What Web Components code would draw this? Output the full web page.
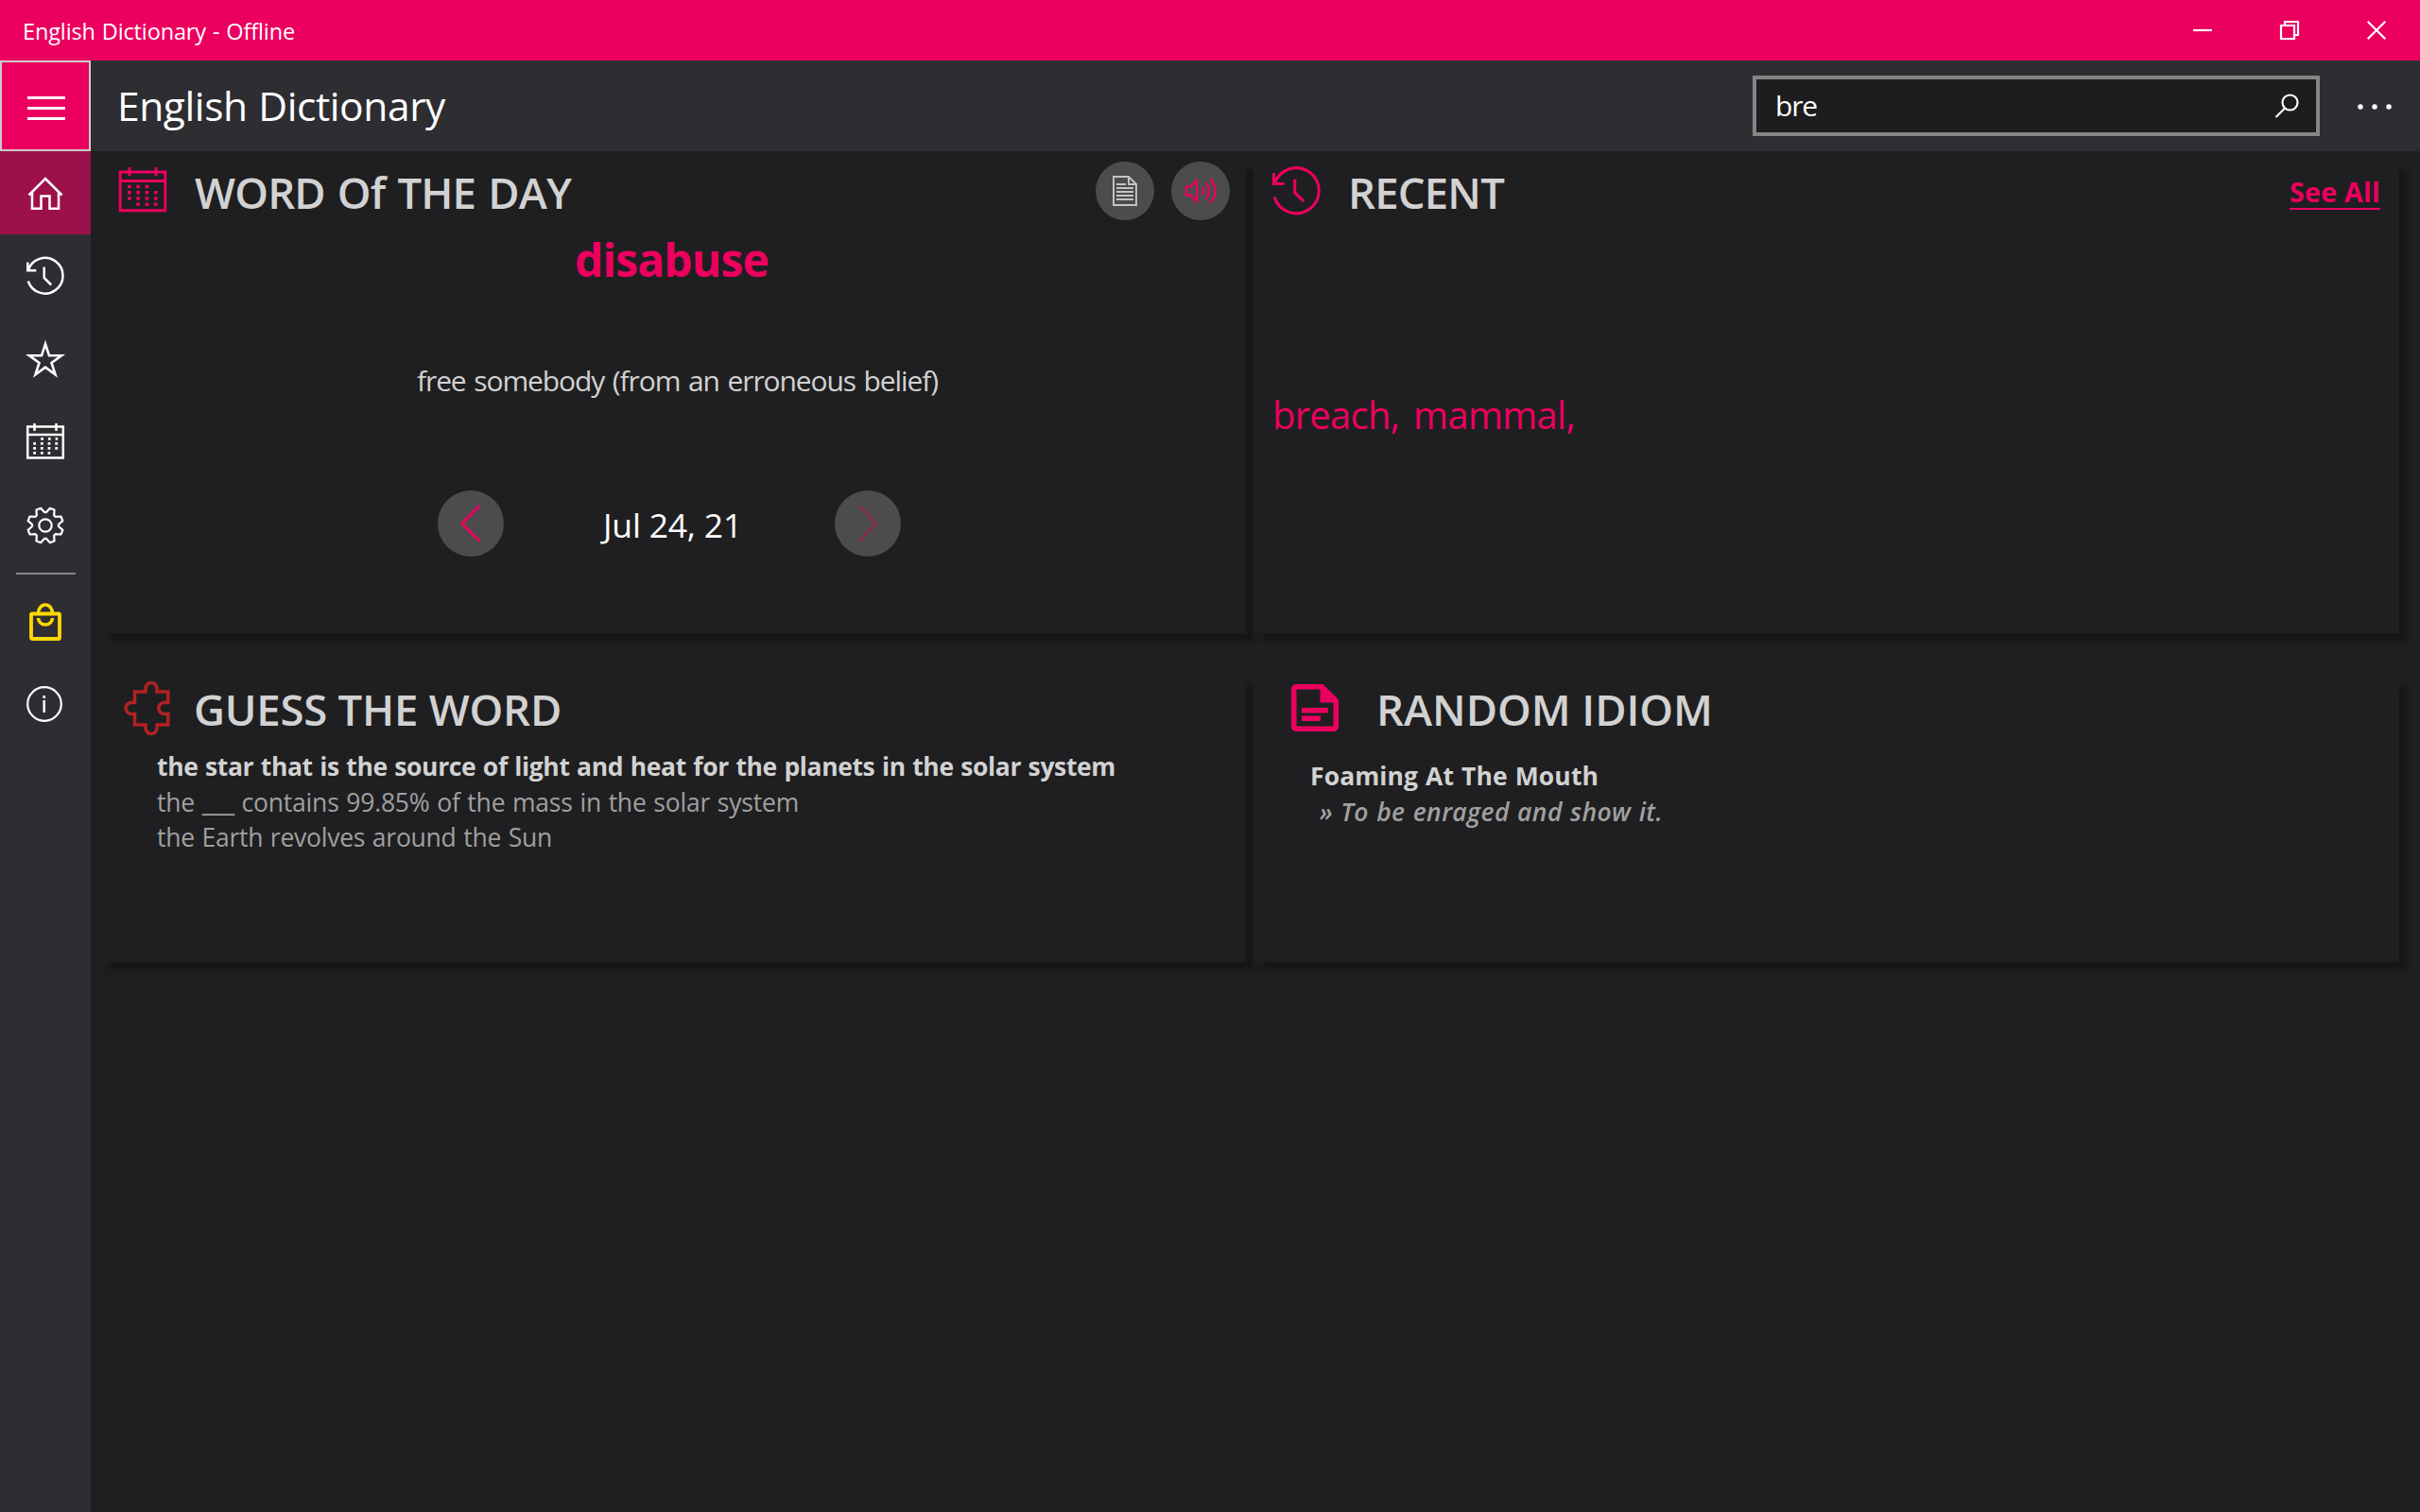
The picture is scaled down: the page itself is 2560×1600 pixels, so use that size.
<!DOCTYPE html>
<html lang="en">
<head>
<meta charset="utf-8">
<title>English Dictionary - Offline</title>
<style>
body{
    margin: 0;
    background: #1f1f21;
    color: #fff;
    font-family: "Open Sans", "Noto Sans", sans-serif;
    overflow: hidden;
}
</style>
</head>
<body>
<app-shell></app-shell>

<script>
// every icon is drawn in its own pixel box: [width, height, markup]
const ICONS = {
    menu: [40, 26, `<path d="M0 1.5h40M0 12.5h40M0 23.5h40" stroke-width="3"/>`],
    home: [38, 36, `<path d="M1.5 19.5 19 2l17.500 17.500M5 16.500V33.700h9.500V20.500h9v13.200H33V16.500" stroke-width="2.500"/>`],
    history: [40, 40, `<path d="M1.300 5.500v8.700h9M1.800 14A18.800 18.800 0 1 1 1.800 25.500M18.700 10.500V22l7.500 7.500" stroke-width="2.500"/>`],
    star: [40, 40, `<path d="M20 4l4 12.300h13l-10.500 7.600 4 12.400L20 28.700 9.500 36.300l4-12.400L3 16.300h13z" stroke-width="2.600"/>`],
    calendar: [40, 38, `<path d="M1.200 3.500h37.600v33H1.200zM1 12h38M8.500 0v8M31.500 0v8" stroke-width="2.500"/>
        <path d="M15.200 16.300h18M7.200 21.300h26M7.200 26.300h26M7.200 31.300h18" stroke-width="2.800" stroke-dasharray="2.800 4.900"/>`],
    gear: [40, 40, `<path class="teeth" stroke-linejoin="round"/><circle cx="20" cy="20" r="6.700"/>`],
    bag: [34, 40, `<rect x="2" y="11.500" width="30" height="26.500" rx="1" stroke-width="3.800"/><path d="M9.500 11a7.500 9 0 0 1 15 0M9.500 16a7.500 7 0 0 0 15 0" stroke-width="3.600"/>`],
    info: [38, 38, `<circle cx="19" cy="19" r="17.800"/><path d="M18.700 15v13M18.700 10v3" stroke-width="2.500"/>`],
    calendarBig: [50, 47, `<path d="M1.200 5h47.600v40.800H1.200zM1.200 14.500h47.600M11 0v9M39 0v9" stroke-width="2.900"/>
        <path d="M9 20.500h24M9 26.800h33M9 33h33M18.300 39.300h24" stroke-width="3.600" stroke-dasharray="3.600 5.700"/>`],
    historyBig: [51, 50, `<path d="M1.500 6v11.500h11M2.500 17A24 24 0 1 1 2.200 31.500M23.700 12.500V27l9.500 9" stroke-width="3.100"/>`],
    puzzle: [48, 57, `<path d="M10.500 11H22V7.500a6 6 0 0 1 12 0V11h11.800v11.500h-4a6 6 0 0 0 0 12h4V46H34v3.500a6 6 0 0 1-12 0V46H10.500V34.500h-3.500a6 6 0 0 1 0-12h3.500z" stroke-width="3.500"/>`],
    note: [50, 50, `<path d="M5 0h28.500L50 16.500V45a5 5 0 0 1-5 5H5a5 5 0 0 1-5-5V5a5 5 0 0 1 5-5zM5.500 5.500v39h39V19.500H30.500V5.500zM11 25h28v5.500H11zM11 33.500h20V39H11z" fill="currentColor" stroke="none" fill-rule="evenodd"/>`],
    page: [26, 32, `<path d="M1 1h16l8 8v22H1zM17 1v8h8M4 9h10M4 13h18M4 17h18M4 21h18M4 25h18" stroke-width="1.900"/>`],
    speaker: [33, 30, `<path d="M1 10.500h4.500L12 4v22l-6.500-6.500H1zM17.500 11a6 6 0 0 1 0 8M21.500 6.500a12 12 0 0 1 0 17M26 2a18 18 0 0 1 0 26" stroke-width="2.300"/>`],
    back: [22, 40, `<path d="M20.500 1 2 20l18.500 19" stroke-width="3"/>`],
    forward: [22, 40, `<path d="M1.500 1 20 20 1.500 39" stroke-width="2.500"/>`],
    search: [26, 26, `<circle cx="16.500" cy="9.500" r="8"/><path d="M11 15.500 1.500 25"/>`],
    more: [36, 6, `<path d="M3 3h.01M18 3h.01M33 3h.01" stroke-width="5.500" stroke-linecap="round"/>`],
    minimize: [20, 20, `<path d="M0 10h20"/>`],
    restore: [20, 20, `<path d="M1 5h14v14H1zM5 5V1h14v14h-4"/>`],
    close: [20, 20, `<path d="M.7.7l18.600 18.600M19.300.7.7 19.300"/>`]
};

// outline of the settings cog, eight teeth round the middle
function gearPath() {
    let d = "";
    for (let i = 0; i < 8; i++) {
        for (const [r, deg] of [[19, -15], [14, -4], [14, 4], [19, 15]]) {
            const a = (i * 45 + deg) * Math.PI / 180;
            d += (d ? "L" : "M") + (20 + r * Math.sin(a)).toFixed(2) + " " + (20 - r * Math.cos(a)).toFixed(2);
        }
    }
    return d + "z";
}

class UiIcon extends HTMLElement {
    connectedCallback() {
        const [w, h, markup] = ICONS[this.getAttribute("name")];
        if (!this.shadowRoot) this.attachShadow({ mode: "open" });
        this.shadowRoot.innerHTML = `
<style>
:host{ display: block; flex: none; line-height: 0; }
svg{ display: block; fill: none; stroke: currentColor; stroke-width: 2.200; overflow: visible; }
</style>
<svg width="${w}" height="${h}" viewBox="0 0 ${w} ${h}">${markup}</svg>`;
        const teeth = this.shadowRoot.querySelector(".teeth");
        if (teeth) teeth.setAttribute("d", gearPath());
    }
}
customElements.define("ui-icon", UiIcon);

// one line of text, tracked so that it fills the given width
class FitText extends HTMLElement {
    connectedCallback() {
        if (!this.shadowRoot) this.attachShadow({ mode: "open" });
        this.shadowRoot.innerHTML = `
<style>
:host{ display: block; }
span{ display: inline-block; vertical-align: top; white-space: pre; }
</style>
<span><slot></slot></span>`;
        const span = this.shadowRoot.querySelector("span");
        const gap = Number(this.getAttribute("width")) - span.getBoundingClientRect().width;
        span.style.letterSpacing = (gap / this.textContent.length).toFixed(3) + "px";
    }
}
customElements.define("fit-text", FitText);

class TitleBar extends HTMLElement {
    constructor() {
        super();
        this.attachShadow({ mode: "open" });
        this.shadowRoot.innerHTML = `
<style>
:host{ display: flex; align-items: center; justify-content: space-between; height: 64px; background: #ec005f; }
fit-text{ font-size: 23.500px; line-height: 64px; margin: 2px 0 0 24px; word-spacing: 1px; }
div{ display: flex; }
ui-icon{ padding: 22px 36px; }
</style>
<fit-text width="288">English Dictionary - Offline</fit-text>
<div><ui-icon name="minimize"></ui-icon><ui-icon name="restore"></ui-icon><ui-icon name="close"></ui-icon></div>`;
    }
}
customElements.define("title-bar", TitleBar);

class NavRail extends HTMLElement {
    constructor() {
        super();
        this.attachShadow({ mode: "open" });
        this.shadowRoot.innerHTML = `
<style>
:host{ display: flex; flex-direction: column; width: 96px; background: #2e2d32; }
a{ box-sizing: border-box; display: flex; align-items: center; justify-content: center; height: 88px; }
.menu{ height: 96px; background: #ec005f; border: 2px solid #ccc; padding: 5px 0 0 2px; }
.active{ background: #9c1149; padding-top: 2px; }
hr{ width: 63px; height: 2px; margin: 6px 0 6px 17px; border: 0; background: #858585; }
.bag{ color: #ffd800; }
.calendar{ padding-bottom: 2px; }
.info{ padding: 0 2px 2px 0; }
</style>
<a class="menu"><ui-icon name="menu"></ui-icon></a>
<a class="active"><ui-icon name="home"></ui-icon></a>
<a><ui-icon name="history"></ui-icon></a>
<a><ui-icon name="star"></ui-icon></a>
<a class="calendar"><ui-icon name="calendar"></ui-icon></a>
<a><ui-icon name="gear"></ui-icon></a>
<hr>
<a class="bag"><ui-icon name="bag"></ui-icon></a>
<a class="info"><ui-icon name="info"></ui-icon></a>`;
    }
}
customElements.define("nav-rail", NavRail);

class AppHeader extends HTMLElement {
    constructor() {
        super();
        this.attachShadow({ mode: "open" });
        this.shadowRoot.innerHTML = `
<style>
:host{ display: flex; align-items: center; height: 96px; background: #2e2d32; }
.title{ flex: 1; margin-left: 28px; font-size: 42.500px; line-height: 94px; word-spacing: 1px; }
.search{ box-sizing: border-box; display: flex; align-items: center; justify-content: space-between; width: 600px; height: 64px; padding: 0 18px 0 20px; border: 4px solid #858585; background: #1d1d1f; }
.search fit-text{ font-size: 30px; line-height: 54px; }
.more{ margin: 2px 30px 0 40px; }
</style>
<fit-text class="title" width="347">English Dictionary</fit-text>
<div class="search"><fit-text width="44">bre</fit-text><ui-icon name="search"></ui-icon></div>
<ui-icon class="more" name="more"></ui-icon>`;
    }
}
customElements.define("app-header", AppHeader);

class RoundButton extends HTMLElement {
    constructor() {
        super();
        this.attachShadow({ mode: "open" });
        this.shadowRoot.innerHTML = `
<style>
:host{ display: flex; flex: none; align-items: center; justify-content: center; width: var(--size, 62px); height: var(--size, 62px); border-radius: 50%; background: #4c4c4c; }
</style>
<slot></slot>`;
    }
}
customElements.define("round-button", RoundButton);

class DashCard extends HTMLElement {
    constructor() {
        super();
        this.attachShadow({ mode: "open" });
        this.shadowRoot.innerHTML = `
<style>
:host{ display: block; background: #1f1f21; box-shadow: 9px 9px 5px -1px #161616; }
header{ display: flex; align-items: center; height: 64px; padding-left: var(--icon-left, 20px); }
.icon{ color: var(--icon-color, #ec005f); }
.title{ flex: 1; margin-left: var(--title-gap, 30px); padding-top: 1px; color: #d2d2d2; font-size: 45.500px; font-weight: 600; line-height: 64px; }
</style>
<header>
<div class="icon"><slot name="icon"></slot></div>
<div class="title"><slot name="title"></slot></div>
<slot name="actions"></slot>
</header>
<slot></slot>`;
    }
}
customElements.define("dash-card", DashCard);

class DashBoard extends HTMLElement {
    constructor() {
        super();
        this.attachShadow({ mode: "open" });
        this.shadowRoot.innerHTML = `
<style>
:host{ display: grid; grid-template-columns: 1212px 1212px; grid-template-rows: 500px 301px; gap: 47px 8px; padding: 10px; align-content: start; }
.day-icon{ padding-bottom: 4px; }
.day-title{ word-spacing: 2px; }
.actions{ display: flex; gap: 18px; margin-right: 17px; color: #ec005f; }
.actions .page{ color: #c4c4c4; }
.word{ margin: 11px 0 0 502px; color: #ec005f; font-size: 48px; font-weight: 700; line-height: 60px; }
.meaning{ margin: 77px 0 0 335px; color: #d2d2d2; font-size: 30px; line-height: 42px; word-spacing: 2px; }
.pager{ --size: 70px; display: flex; justify-content: space-between; width: 490px; margin: 95px 0 0 357px; color: #ec005f; }
.pager fit-text{ padding: 1px 0 0 7px; color: #fff; font-size: 35.500px; line-height: 70px; }
.pager .off{ color: #8d2650; }
.all{ margin-right: 20px; padding-top: 4px; color: #ec005f; font-size: 28.500px; font-weight: 700; }
.all fit-text{ line-height: 34px; border-bottom: 2px solid; }
.recent{ margin: 178px 0 0 20px; color: #ec005f; font-size: 40px; line-height: 54px; word-spacing: 5px; }
.guess, .idiom{ padding: 12px 0 0 60px; color: #a0a0a0; font-size: 26.500px; line-height: 37.500px; word-spacing: 1px; }
.idiom{ padding-top: 22px; }
.lead{ color: #d2d2d2; font-weight: 700; }
.sense{ padding-left: 10px; font-weight: 600; font-style: italic; }
.puzzle{ --icon-left: 26px; --icon-color: #b22222; --title-gap: 25px; }
.random{ --icon-left: 40px; --title-gap: 40px; }
.history{ --title-gap: 29px; }
</style>
<dash-card>
<ui-icon class="day-icon" slot="icon" name="calendarBig"></ui-icon>
<fit-text class="day-title" slot="title" width="398">WORD Of THE DAY</fit-text>
<div class="actions" slot="actions"><round-button class="page"><ui-icon name="page"></ui-icon></round-button><round-button><ui-icon name="speaker"></ui-icon></round-button></div>
<fit-text class="word" width="205">disabuse</fit-text>
<fit-text class="meaning" width="551">free somebody (from an erroneous belief)</fit-text>
<div class="pager"><round-button><ui-icon name="back"></ui-icon></round-button><fit-text width="147">Jul 24, 21</fit-text><round-button class="off"><ui-icon name="forward"></ui-icon></round-button></div>
</dash-card>
<dash-card class="history">
<ui-icon slot="icon" name="historyBig"></ui-icon>
<fit-text slot="title" width="165">RECENT</fit-text>
<div class="all" slot="actions"><fit-text width="96">See All</fit-text></div>
<fit-text class="recent" width="320">breach, mammal,</fit-text>
</dash-card>
<dash-card class="puzzle">
<ui-icon slot="icon" name="puzzle"></ui-icon>
<fit-text slot="title" width="389">GUESS THE WORD</fit-text>
<div class="guess">
<fit-text class="lead" width="1014">the star that is the source of light and heat for the planets in the solar system</fit-text>
<fit-text width="679">the ___ contains 99.85% of the mass in the solar system</fit-text>
<fit-text width="418">the Earth revolves around the Sun</fit-text>
</div>
</dash-card>
<dash-card class="random">
<ui-icon slot="icon" name="note"></ui-icon>
<fit-text slot="title" width="356">RANDOM IDIOM</fit-text>
<div class="idiom">
<fit-text class="lead" width="305">Foaming At The Mouth</fit-text>
<fit-text class="sense" width="363">» To be enraged and show it.</fit-text>
</div>
</dash-card>`;
    }
}
customElements.define("dash-board", DashBoard);

class AppShell extends HTMLElement {
    constructor() {
        super();
        this.attachShadow({ mode: "open" });
        this.shadowRoot.innerHTML = `
<style>
:host{ display: flex; flex-direction: column; height: 100vh; }
.body{ display: flex; flex: 1; }
main{ flex: 1; }
</style>
<title-bar></title-bar>
<div class="body">
<nav-rail></nav-rail>
<main><app-header></app-header><dash-board></dash-board></main>
</div>`;
    }
}
customElements.define("app-shell", AppShell);
</script>
</body>
</html>
